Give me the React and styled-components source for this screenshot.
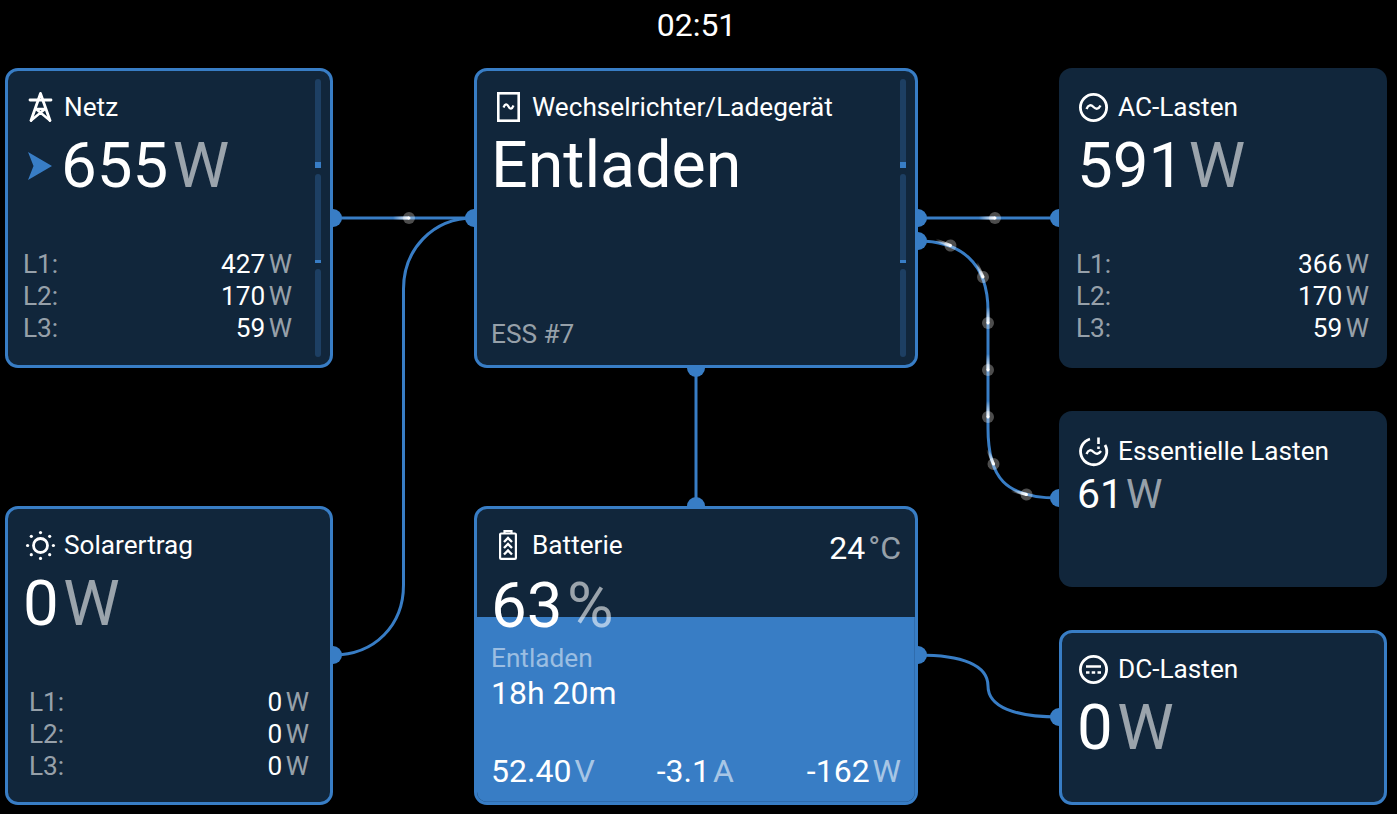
import React from "react";
import styled, { createGlobalStyle } from "styled-components";

const Global = createGlobalStyle`
  html, body { margin: 0; padding: 0; background: #000; }
  body { font-family: Roboto, "Liberation Sans", sans-serif; color: #fff; }
  * { box-sizing: border-box; }
`;

const BLUE = "#387dc5";
const NAVY = "#11263b";
const SMALL = "26.2px";
const MID = "32px";

const Page = styled.div`
  position: relative;
  width: 1397px;
  height: 814px;
  overflow: hidden;
  background: #000;
`;
const Clock = styled.div`
  height: 68px;
  padding-top: 6px;
  text-align: center;
  font-size: 32px;
  line-height: 38px;
  margin-left: -4px;
`;
const Columns = styled.div`
  position: relative;
  z-index: 1;
  display: flex;
  justify-content: space-between;
  padding: 0 10px 0 5px;
  height: 737px;
`;
const Column = styled.div`
  display: flex;
  flex-direction: column;
  justify-content: space-between;
  width: ${(p) => p.$w}px;
`;
const Card = styled.section`
  position: relative;
  display: flex;
  flex-direction: column;
  height: ${(p) => p.$h}px;
  padding-top: ${(p) => p.$pt ?? (p.$bordered ? 20 : 23)}px;
  padding-bottom: ${(p) => p.$pb ?? (p.$bordered ? 21 : 24)}px;
  padding-left: ${(p) => p.$pl ?? 14}px;
  padding-right: ${(p) => p.$pr ?? 38}px;
  background: ${NAVY};
  border: ${(p) => (p.$bordered ? `3px solid ${BLUE}` : "none")};
  border-radius: 13px;
  overflow: hidden;
`;
const Header = styled.div`
  display: flex;
  align-items: center;
  height: 32px;
  gap: ${(p) => p.$gap ?? 10}px;
  padding-left: ${(p) => p.$inset ?? 0}px;
  font-size: ${SMALL};
  line-height: 32px;
`;
const IconSlot = styled.svg`
  flex: none;
  display: block;
  overflow: visible;
`;
const ValueRow = styled.div`
  display: flex;
  align-items: center;
  gap: 9px;
  margin-top: ${(p) => p.$top ?? 6}px;
  padding-left: ${(p) => p.$inset ?? 0}px;
  font-size: ${(p) => p.$size ?? 63.6}px;
  line-height: ${(p) => (p.$size ? p.$size * 1.17 : 74)}px;
`;
const Quantity = styled.span`
  display: inline-flex;
  gap: ${(p) => p.$gap ?? 4.4}px;
  margin-right: ${(p) => p.$mr ?? 0}px;
`;
const Unit = styled.span`
  color: rgba(255, 255, 255, 0.58);
`;
const Phases = styled.div`
  display: flex;
  flex-direction: column;
  margin-top: auto;
  padding-left: ${(p) => p.$inset ?? 0}px;
`;
const PhaseRow = styled.div`
  display: flex;
  justify-content: space-between;
  height: 32px;
  font-size: ${SMALL};
  line-height: 32px;
`;
const PhaseName = styled.span`
  color: rgba(255, 255, 255, 0.58);
`;
const Gauge = styled.div`
  position: absolute;
  top: 8px;
  bottom: 8px;
  right: 9px;
  width: 6px;
  display: flex;
  flex-direction: column;
  gap: 6px;
`;
const GaugeTrack = styled.div`
  flex: ${(p) => p.$grow} 0 0;
  display: flex;
  flex-direction: column;
  justify-content: flex-end;
  background: #1d3f63;
  border-radius: ${(p) => (p.$fill ? "3px 3px 0 0" : "3px")};
`;
const GaugeFill = styled.div`
  height: ${(p) => p.$h}px;
  background: ${BLUE};
`;
const Caption = styled.div`
  margin-top: auto;
  margin-bottom: -6px;
  font-size: ${SMALL};
  line-height: 32px;
  color: rgba(255, 255, 255, 0.58);
`;
const BatteryFill = styled.div`
  position: absolute;
  left: 0;
  right: 0;
  bottom: 0;
  height: 185px;
  background: ${BLUE};
  border-right: 1px solid #2f6cad;
  border-bottom: 1px solid #2f6cad;
`;
const BatteryContent = styled.div`
  position: relative;
  z-index: 1;
  display: flex;
  flex-direction: column;
  height: 100%;
`;
const BatteryTop = styled.div`
  display: flex;
  justify-content: space-between;
  align-items: flex-start;
`;
const Temperature = styled.div`
  display: flex;
  gap: 3px;
  margin-top: -1px;
  font-size: ${MID};
  line-height: 40px;
`;
const Status = styled.div`
  margin-top: -1px;
  font-size: ${SMALL};
  line-height: 32px;
  color: rgba(255, 255, 255, 0.5);
`;
const TimeLeft = styled.div`
  font-size: ${MID};
  line-height: 40px;
  margin-top: -1px;
`;
const BatteryStats = styled.div`
  display: flex;
  justify-content: space-between;
  margin-top: auto;
  margin-bottom: -10px;
  font-size: ${MID};
  line-height: 40px;
`;
const Wires = styled.svg`
  position: absolute;
  left: 0;
  top: 0;
  z-index: 0;
  pointer-events: none;
`;

const IconPylon = () => (
  <IconSlot width="24" height="30" viewBox="0 0 24 30" fill="none" stroke="#fff" strokeWidth="2.8" strokeLinecap="round" strokeLinejoin="round">
    <path d="M12.5 1.5 L3 28.5 M12.5 1.5 L22 28.5" />
    <path d="M2 8 H23" />
    <path d="M8 17 L22 28.5 M17 17 L3 28.5 M8 17 H17" strokeWidth="2.4" />
  </IconSlot>
);
const IconInverter = () => (
  <IconSlot width="23" height="30" viewBox="0 0 23 30" fill="none" stroke="#fff" strokeWidth="2.6">
    <rect x="1.3" y="1.3" width="20.4" height="27.4" />
    <path d="M6.5 15.5 C8 11.5 10 11.5 11.5 14.5 C13 17.5 15 17.5 16.5 13.5" strokeWidth="2.2" />
  </IconSlot>
);
const IconAC = () => (
  <IconSlot width="29" height="29" viewBox="0 0 29 29" fill="none" stroke="#fff" strokeWidth="2.8">
    <circle cx="14.5" cy="14.5" r="13.1" />
    <path d="M7.5 16 C9.5 11.5 12 11.5 14.5 14 C17 16.5 19.5 16.5 21.5 12.5" strokeWidth="2.4" />
  </IconSlot>
);
const IconEssential = () => (
  <IconSlot width="29" height="29" viewBox="0 0 29 29" fill="none" stroke="#fff" strokeWidth="2.8">
    <path d="M11 2 A13.1 13.1 0 1 0 26 8" />
    <path d="M19.5 0.5 V7 M19.5 9.5 V12" strokeWidth="2.6" />
    <path d="M7.5 17 C9.5 12.5 12 12.5 14.5 15 C17 17.5 19.5 17.5 22 14" strokeWidth="2.4" />
  </IconSlot>
);
const IconDC = () => (
  <IconSlot width="29" height="29" viewBox="0 0 29 29" fill="none" stroke="#fff" strokeWidth="2.8">
    <circle cx="14.5" cy="14.5" r="13.1" />
    <path d="M7 11.5 H22" strokeWidth="2.4" />
    <path d="M7 17.5 H10.5 M12.7 17.5 H16.2 M18.5 17.5 H22" strokeWidth="2.4" />
  </IconSlot>
);
const IconSun = () => (
  <IconSlot width="29" height="29" viewBox="0 0 29 29" fill="none" stroke="#fff" strokeWidth="2.8">
    <circle cx="14.5" cy="14.5" r="7" />
    <g fill="#fff" stroke="none">
      <circle cx="14.5" cy="1.6" r="1.6" />
      <circle cx="14.5" cy="27.4" r="1.6" />
      <circle cx="1.6" cy="14.5" r="1.6" />
      <circle cx="27.4" cy="14.5" r="1.6" />
      <circle cx="5.3" cy="5.3" r="1.6" />
      <circle cx="23.7" cy="5.3" r="1.6" />
      <circle cx="5.3" cy="23.7" r="1.6" />
      <circle cx="23.7" cy="23.7" r="1.6" />
    </g>
  </IconSlot>
);
const IconBattery = () => (
  <IconSlot width="18" height="30" viewBox="0 0 18 30" fill="none" stroke="#fff" strokeWidth="2.2">
    <rect x="1.1" y="3.5" width="15.8" height="25.4" rx="1" />
    <path d="M5.5 3 V1.1 H12.5 V3" />
    <path d="M5 12 L9 8 L13 12 M5 18 L9 14 L13 18 M5 24.5 L9 20.5 L13 24.5" strokeWidth="2.4" />
  </IconSlot>
);

const Q = ({ v, u, gap, mr }) => (
  <Quantity $gap={gap} $mr={mr}>
    <span>{v}</span>
    <Unit>{u}</Unit>
  </Quantity>
);

const PhaseList = ({ rows, inset }) => (
  <Phases $inset={inset}>
    {rows.map(([n, v]) => (
      <PhaseRow key={n}>
        <PhaseName>{n}:</PhaseName>
        <Q v={v} u="W" gap={3.5} />
      </PhaseRow>
    ))}
  </Phases>
);

const Gauges = ({ top, mid }) => (
  <Gauge>
    <GaugeTrack $grow={89} $fill><GaugeFill $h={top} /></GaugeTrack>
    <GaugeTrack $grow={88} $fill><GaugeFill $h={mid} /></GaugeTrack>
    <GaugeTrack $grow={88} />
  </Gauge>
);

const wirePaths = [
  "M333 218 H474",
  "M474 218 C432 218 403.5 250 403.5 289 V585 C403.5 625 375 655 333 655",
  "M918 218 H1059",
  "M918 241 C960 241 988 262 988 311 V428 C988 478 1005 498 1059 498",
  "M696 368 V506",
  "M918 655 C962 655 988 665 988 686 C988 707 1015 717 1059 717",
];
const nubs = [
  [333, 218], [474, 218], [918, 218], [1059, 218], [918, 241], [1059, 498],
  [696, 368], [696, 506], [333, 655], [918, 655], [1059, 717],
];
const sparks = [
  [409, 218, 0], [995, 218, 0], [950.5, 245.5, 20], [983, 277, 65], [988, 323, 90],
  [988, 370, 90], [988, 417, 90], [993.5, 464, 68], [1026.5, 494.5, 15],
];

const WireLayer = () => (
  <Wires width="1397" height="814" viewBox="0 0 1397 814" fill="none">
    <defs>
      <linearGradient id="tail" x1="0" x2="1" y1="0" y2="0">
        <stop offset="0" stopColor="#fff" stopOpacity="0" />
        <stop offset="1" stopColor="#fff" />
      </linearGradient>
    </defs>
    {wirePaths.map((d) => (
      <path key={d} d={d} stroke={BLUE} strokeWidth="3" />
    ))}
    {nubs.map(([x, y]) => (
      <circle key={`${x}-${y}`} cx={x} cy={y} r="9" fill={BLUE} />
    ))}
    {sparks.map(([x, y, a]) => (
      <g key={`${x}-${y}`} transform={`translate(${x} ${y}) rotate(${a})`}>
        <circle r="6" fill="#fff" opacity="0.3" />
        <rect x="-16" y="-1.5" width="16" height="3" fill="url(#tail)" />
        <circle r="1.5" fill="#fff" />
      </g>
    ))}
  </Wires>
);

export default function App() {
  return (
    <Page>
      <Global />
      <WireLayer />
      <Clock>02:51</Clock>
      <Columns>
        <Column $w={328}>
          <Card $h={300} $bordered>
            <Header $inset={6} $gap={12}><IconPylon />Netz</Header>
            <ValueRow $inset={6}>
              <IconSlot width="24" height="28" viewBox="0 0 24 28"><path d="M0 0 L24 14 L0 28 L5.5 14 Z" fill={BLUE} /></IconSlot>
              <Q v="655" u="W" />
            </ValueRow>
            <PhaseList rows={[["L1", 427], ["L2", 170], ["L3", 59]]} inset={1} />
            <Gauges top={6} mid={3} />
          </Card>
          <Card $h={299} $bordered $pr={21} $pb={20}>
            <Header $inset={4} $gap={9}><IconSun />Solarertrag</Header>
            <ValueRow $inset={1}>
              <Q v="0" u="W" />
            </ValueRow>
            <PhaseList rows={[["L1", 0], ["L2", 0], ["L3", 0]]} inset={7} />
          </Card>
        </Column>
        <Column $w={444}>
          <Card $h={300} $bordered>
            <Header $inset={6} $gap={12}><IconInverter />Wechselrichter/Ladegerät</Header>
            <ValueRow $top={5} $size={64.5}>Entladen</ValueRow>
            <Caption>ESS #7</Caption>
            <Gauges top={6} mid={3} />
          </Card>
          <Card $h={299} $bordered $pr={14}>
            <BatteryFill />
            <BatteryContent>
              <BatteryTop>
                <Header $inset={8} $gap={15}><IconBattery />Batterie</Header>
                <Temperature><span>24</span><Unit>°C</Unit></Temperature>
              </BatteryTop>
              <ValueRow $top={1}><Q v="63" u="%" /></ValueRow>
              <Status>Entladen</Status>
              <TimeLeft>18h 20m</TimeLeft>
              <BatteryStats>
                <Q v="52.40" u="V" gap={3} />
                <Q v="-3.1" u="A" gap={3} mr={11} />
                <Q v="-162" u="W" gap={3} />
              </BatteryStats>
            </BatteryContent>
          </Card>
        </Column>
        <Column $w={328}>
          <Card $h={300} $pl={17} $pr={18}>
            <Header $inset={3}><IconAC />AC-Lasten</Header>
            <ValueRow $inset={1}>
              <Q v="591" u="W" />
            </ValueRow>
            <PhaseList rows={[["L1", 366], ["L2", 170], ["L3", 59]]} />
          </Card>
          <Card $h={176} $pl={17} $pr={18} $pt={24}>
            <Header $inset={3}><IconEssential />Essentielle Lasten</Header>
            <ValueRow $size={41} $top={4} $inset={1}>
              <Q v="61" u="W" gap={3} />
            </ValueRow>
          </Card>
          <Card $h={175} $bordered>
            <Header $inset={3}><IconDC />DC-Lasten</Header>
            <ValueRow $inset={1}>
              <Q v="0" u="W" />
            </ValueRow>
          </Card>
        </Column>
      </Columns>
    </Page>
  );
}
